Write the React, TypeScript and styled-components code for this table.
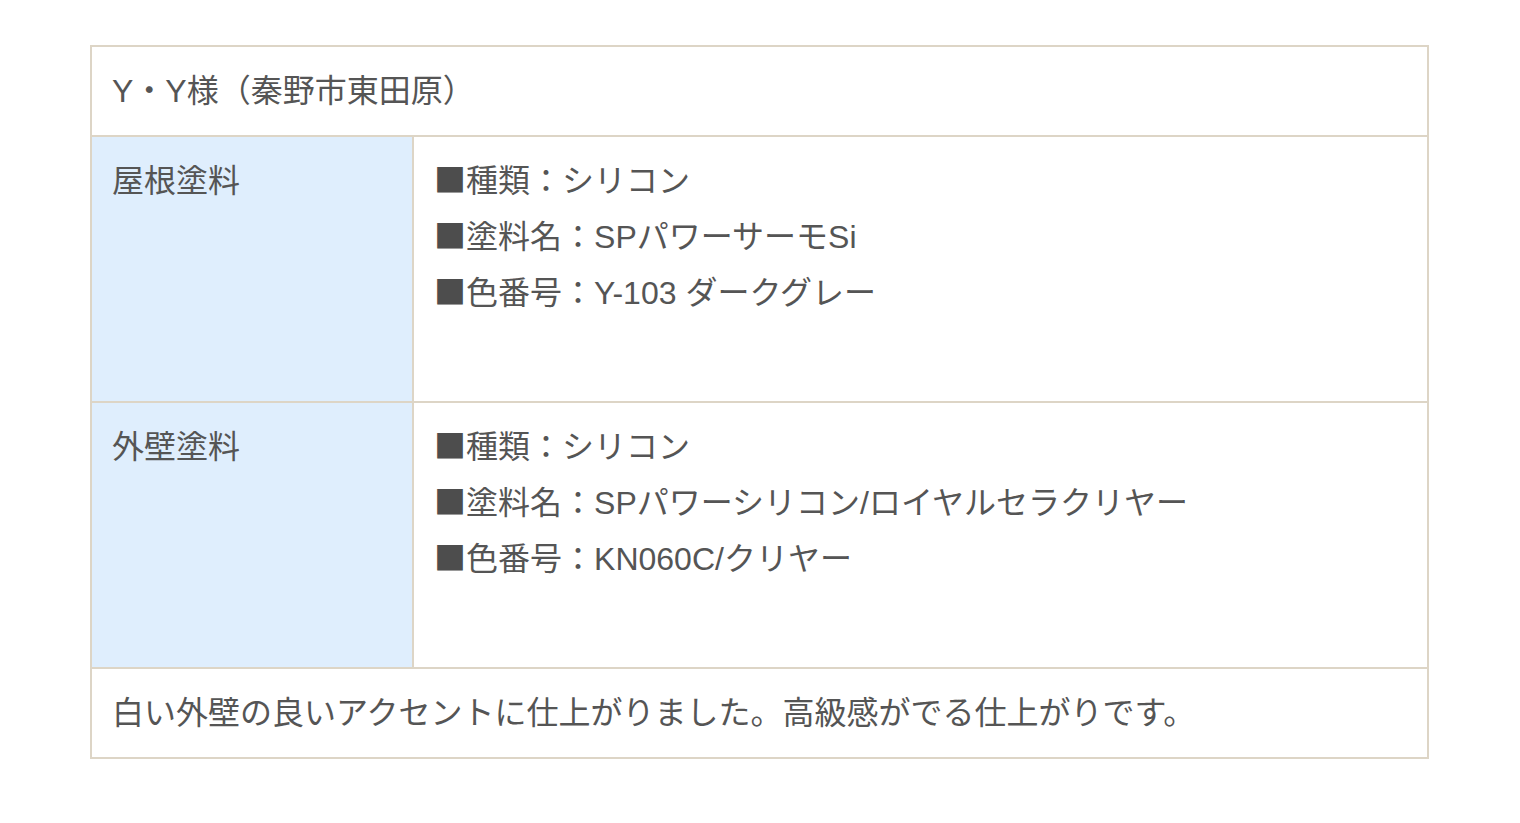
import React from "react";
import styled, { createGlobalStyle } from "styled-components";

const GlobalStyle = createGlobalStyle`
  html, body {
    margin: 0;
    padding: 0;
    background: #ffffff;
  }
  body {
    font-family: "Liberation Sans", "Noto Sans CJK JP", sans-serif;
    color: #555555;
  }
`;

const Page = styled.div`
  padding: 45px 0 0 90px;
`;

const Table = styled.table`
  width: 1339px;
  border-collapse: collapse;
  table-layout: fixed;
  font-family: "Liberation Sans", "Noto Sans CJK JP", sans-serif;
  font-size: 32px;
  line-height: 56px;
  color: #555555;
`;

const Cell = styled.td<{ $head?: boolean; $tall?: boolean }>`
  border: 2px solid #ddd5c6;
  padding: ${(p) => (p.$tall ? "16px 20px 24px" : "16px 20px 16px")};
  vertical-align: top;
  background: ${(p) => (p.$head ? "#dfeefd" : "#ffffff")};
  text-align: left;
  font-weight: 400;
`;

const Line = styled.div`
  height: 56px;
  line-height: 56px;
  white-space: nowrap;
`;

const Mark = styled.span`
  font-family: "Noto Sans CJK JP", sans-serif;
  line-height: 1;
  color: #4d4d4d;
`;

type Spec = { label: string; lines: [string, string][] };

const specs: Spec[] = [
  {
    label: "屋根塗料",
    lines: [
      ["種類", "シリコン"],
      ["塗料名", "SPパワーサーモSi"],
      ["色番号", "Y-103 ダークグレー"],
    ],
  },
  {
    label: "外壁塗料",
    lines: [
      ["種類", "シリコン"],
      ["塗料名", "SPパワーシリコン/ロイヤルセラクリヤー"],
      ["色番号", "KN060C/クリヤー"],
    ],
  },
];

export default function App() {
  return (
    <>
      <GlobalStyle />
      <Page>
        <Table>
          <colgroup>
            <col style={{ width: 322 }} />
            <col />
          </colgroup>
          <tbody>
            <tr>
              <Cell colSpan={2}>
                <Line>Y・Y様（秦野市東田原）</Line>
              </Cell>
            </tr>
            {specs.map((s) => (
              <tr key={s.label}>
                <Cell as="th" $head $tall>
                  <Line>{s.label}</Line>
                </Cell>
                <Cell $tall>
                  {s.lines.map(([k, v]) => (
                    <Line key={k}>
                      <Mark>■</Mark>
                      {k}：{v}
                    </Line>
                  ))}
                  <Line />
                </Cell>
              </tr>
            ))}
            <tr>
              <Cell colSpan={2}>
                <Line>
                  白い外壁の良いアクセントに仕上がりました。高級感がでる仕上がりです。
                </Line>
              </Cell>
            </tr>
          </tbody>
        </Table>
      </Page>
    </>
  );
}
